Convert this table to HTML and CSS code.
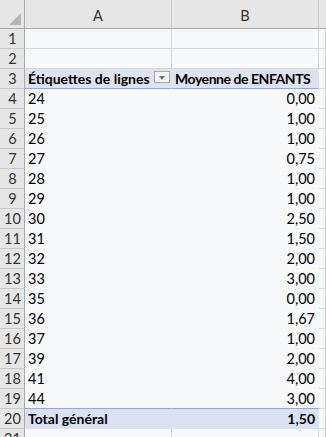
FILE: index.html
```html
<!DOCTYPE html>
<html lang="fr">
<head>
<meta charset="utf-8">
<title>Tableau croisé</title>
<link rel="stylesheet" href="styles.css">
</head>
<body>
<div class="sheet">
  <div class="corner"><span class="tri"></span></div>
  <div class="colh">A</div>
  <div class="colh">B</div>
  <div class="colh last"></div>

  <div class="rowh">1</div><div class="cell"></div><div class="cell"></div><div class="cell"></div>
  <div class="rowh">2</div><div class="cell"></div><div class="cell"></div><div class="cell"></div>

  <div class="rowh">3</div>
  <div class="cell pvh lab">Étiquettes de lignes <span class="dd"><span class="ddtri"></span></span></div>
  <div class="cell pvh val">Moyenne de ENFANTS</div>
  <div class="cell"></div>

  <div class="rowh">4</div><div class="cell pv">24</div><div class="cell pv num">0,00</div><div class="cell"></div>
  <div class="rowh">5</div><div class="cell pv">25</div><div class="cell pv num">1,00</div><div class="cell"></div>
  <div class="rowh">6</div><div class="cell pv">26</div><div class="cell pv num">1,00</div><div class="cell"></div>
  <div class="rowh">7</div><div class="cell pv">27</div><div class="cell pv num">0,75</div><div class="cell"></div>
  <div class="rowh">8</div><div class="cell pv">28</div><div class="cell pv num">1,00</div><div class="cell"></div>
  <div class="rowh">9</div><div class="cell pv">29</div><div class="cell pv num">1,00</div><div class="cell"></div>
  <div class="rowh">10</div><div class="cell pv">30</div><div class="cell pv num">2,50</div><div class="cell"></div>
  <div class="rowh">11</div><div class="cell pv">31</div><div class="cell pv num">1,50</div><div class="cell"></div>
  <div class="rowh">12</div><div class="cell pv">32</div><div class="cell pv num">2,00</div><div class="cell"></div>
  <div class="rowh">13</div><div class="cell pv">33</div><div class="cell pv num">3,00</div><div class="cell"></div>
  <div class="rowh">14</div><div class="cell pv">35</div><div class="cell pv num">0,00</div><div class="cell"></div>
  <div class="rowh">15</div><div class="cell pv">36</div><div class="cell pv num">1,67</div><div class="cell"></div>
  <div class="rowh">16</div><div class="cell pv">37</div><div class="cell pv num">1,00</div><div class="cell"></div>
  <div class="rowh">17</div><div class="cell pv">39</div><div class="cell pv num">2,00</div><div class="cell"></div>
  <div class="rowh">18</div><div class="cell pv">41</div><div class="cell pv num">4,00</div><div class="cell"></div>
  <div class="rowh">19</div><div class="cell pv">44</div><div class="cell pv num">3,00</div><div class="cell"></div>

  <div class="rowh">20</div>
  <div class="cell pvt">Total général</div>
  <div class="cell pvt num">1,50</div>
  <div class="cell"></div>

  <div class="rowh">21</div><div class="cell"></div><div class="cell"></div><div class="cell"></div>
</div>
</body>
</html>
```

FILE: styles.css
```css
html, body {
  margin: 0;
  padding: 0;
  background: #f8f9fb;
  overflow: hidden;
}

.sheet {
  display: grid;
  grid-template-columns: 25px 147px 147px 1fr;
  grid-template-rows: 29px;
  grid-auto-rows: 20px;
  width: 326px;
  font-family: Lato, "Open Sans", sans-serif;
  font-size: 14.5px;
  color: #000;
}

.sheet > div {
  box-sizing: border-box;
  white-space: nowrap;
  overflow: hidden;
}

.corner {
  position: relative;
  background: #e6e6e6;
  border-right: 1px solid #a9a9a9;
  border-bottom: 1px solid #a9a9a9;
}

.tri {
  position: absolute;
  left: 9px;
  top: 13px;
  width: 0;
  height: 0;
  border-left: 12px solid transparent;
  border-bottom: 12px solid #b5b5b5;
}

.colh {
  background: #e6e6e6;
  border-right: 1px solid #cacaca;
  border-bottom: 1px solid #a9a9a9;
  color: #333;
  display: flex;
  align-items: center;
  justify-content: center;
  padding-top: 3px;
}

.colh.last {
  border-right: none;
}

.rowh {
  background: #e6e6e6;
  border-right: 1px solid #a9a9a9;
  border-bottom: 1px solid #c8c8c8;
  color: #333;
  display: flex;
  align-items: center;
  justify-content: center;
  padding-left: 1px;
}

.cell {
  background: #f8f9fb;
  border-right: 1px solid #d6d6d6;
  border-bottom: 1px solid #d6d6d6;
  display: flex;
  align-items: center;
  padding: 0 3px;
}

.num {
  justify-content: flex-end;
}

.pv {
  border-right-color: #f8f9fb;
  border-bottom-color: #f8f9fb;
}

.pvh {
  background: #dde3f1;
  font-weight: bold;
  font-size: 14px;
  border-bottom: 1px solid #8ea9db;
  border-right-color: #dde3f1;
}

.pvh.lab {
  position: relative;
}

.pvh.val {
  letter-spacing: -0.45px;
}

.dd {
  position: absolute;
  right: 1px;
  top: 2px;
  width: 16px;
  height: 12px;
  box-sizing: border-box;
  border: 1px solid #a8a8a8;
  background: #f3f3f3;
  display: flex;
  align-items: center;
  justify-content: center;
}

.ddtri {
  width: 0;
  height: 0;
  border-left: 3px solid transparent;
  border-right: 3px solid transparent;
  border-top: 4px solid #707070;
  margin-top: 1px;
}

.pvt {
  background: #d9e1f2;
  font-weight: bold;
  font-size: 14px;
  border-top: 1px solid #8eaadb;
  border-right-color: #d9e1f2;
  border-bottom: 1px solid #d9e1f2;
  margin-top: -1px;
  height: 21px;
}
```
